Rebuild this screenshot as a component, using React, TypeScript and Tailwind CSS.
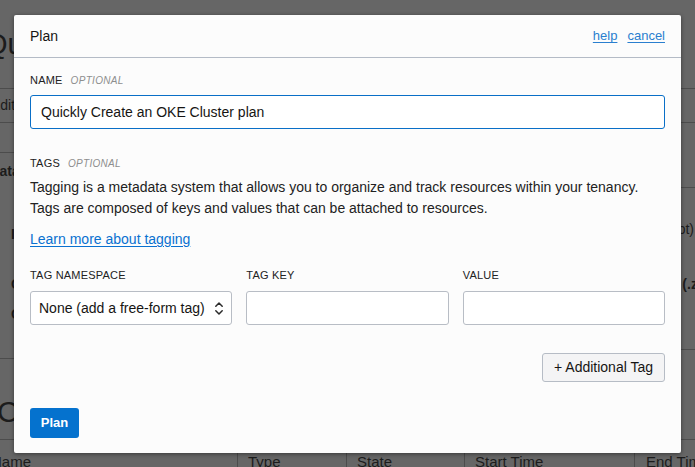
import React from "react";

function Label({ text, optional }: { text: string; optional?: boolean }) {
  return (
    <div className="flex items-baseline h-[14px] leading-[14px]">
      <span className="text-[11px] text-[#222] tracking-[0.2px]">{text}</span>
      {optional && (
        <span className="ml-[8px] text-[10px] italic text-[#8e8e8e] tracking-[0.3px] font-light">
          OPTIONAL
        </span>
      )}
    </div>
  );
}

function Background() {
  return (
    <div className="absolute inset-0 overflow-hidden bg-[#666666] text-[#1c1c1c]">
      <div className="flex flex-col">
        <div className="-ml-[15px] mt-[24px] h-[40px] text-[29px] leading-[40px] whitespace-nowrap">
          Quickly Create an OKE Cluster
        </div>
        <div className="mt-[24px] h-[35px] border-y border-[#4c4c4c] flex items-center -ml-[9px] text-[14px] whitespace-nowrap">
          Edit Stack
        </div>
        <div className="flex mt-[29px]">
          <div className="w-[240px] shrink-0 border-y border-[#4c4c4c] h-[207px] flex flex-col text-[14px] whitespace-nowrap">
            <div className="-ml-[41px] mt-[9px] font-bold leading-[18px]">Metadata</div>
            <div className="pl-[11px] mt-[45px] font-bold leading-[18px]">ID:</div>
            <div className="pl-[11px] mt-[32px] font-bold leading-[18px]">Compartment:</div>
            <div className="pl-[11px] mt-[12px] font-bold leading-[18px]">Created:</div>
          </div>
          <div className="flex-1" />
          <div className="w-[260px] shrink-0 mt-[35px] border-y border-[#4c4c4c] h-[163px] flex flex-col text-[14px] whitespace-nowrap">
            <div className="mt-[32px] flex justify-end pr-[1px] leading-[18px]">Terraform (Script)</div>
            <div className="mt-[37px] flex justify-end -mr-[20px] font-bold leading-[18px]">Terraform config (.zip)</div>
          </div>
        </div>
        <div className="mt-[33px] -ml-[3px] h-[40px] text-[30px] leading-[40px] whitespace-nowrap">
          Cluster Jobs
        </div>
        <div className="mt-[7px] border-t border-[#4c4c4c] flex h-[40px] text-[15px] whitespace-nowrap">
          <div className="w-[238px] shrink-0 border-r border-[#4c4c4c] pt-[11px]">
            <span className="-ml-[9px] inline-block">Name</span>
          </div>
          <div className="w-[109px] shrink-0 border-r border-[#4c4c4c] pl-[10px] pt-[11px]">Type</div>
          <div className="w-[118px] shrink-0 border-r border-[#4c4c4c] pl-[10px] pt-[11px]">State</div>
          <div className="w-[170px] shrink-0 border-r border-[#4c4c4c] pl-[10px] pt-[11px]">Start Time</div>
          <div className="flex-1 min-w-0 pl-[11px] pt-[11px]">End Time</div>
        </div>
      </div>
    </div>
  );
}

function UpDown() {
  return (
    <svg width="10" height="15" viewBox="0 0 10 15" fill="none" stroke="#2a2a2a" strokeWidth="1.5" strokeLinecap="round" strokeLinejoin="round">
      <path d="M1.8 5.2 L5 2 L8.2 5.2" />
      <path d="M1.8 9.8 L5 13 L8.2 9.8" />
    </svg>
  );
}

export default function App() {
  return (
    <div
      className="relative w-[695px] h-[467px] overflow-hidden"
      style={{ fontFamily: '"Liberation Sans", Arial, sans-serif' }}
    >
      <Background />
      <div className="absolute left-[14px] top-[15px] w-[667px] h-[438px] bg-[#fcfcfc] rounded-[2px] shadow-[0_1px_4px_rgba(0,0,0,0.45)] flex flex-col">
        <div className="h-[43px] border-b border-[#b4bbc6] flex items-center justify-between pl-[16px] pr-[16px]">
          <span className="text-[14px] text-[#161513]">Plan</span>
          <div className="flex items-center gap-[10px] text-[13px] text-[#2a7fcf]">
            <span className="underline underline-offset-[2px]">help</span>
            <span className="underline underline-offset-[2px]">cancel</span>
          </div>
        </div>
        <div className="flex flex-col px-[16px] pt-[15px]">
          <Label text="NAME" optional />
          <div className="mt-[8px] h-[34px] border border-[#0a6fc7] rounded-[3px] bg-white flex items-center pl-[10px] text-[14px] text-[#161513]">
            Quickly Create an OKE Cluster plan
          </div>
          <div className="mt-[27px]">
            <Label text="TAGS" optional />
          </div>
          <p className="mt-[7px] text-[14px] leading-[21px] text-[#222]">
            Tagging is a metadata system that allows you to organize and track resources within your tenancy.
            <br />
            Tags are composed of keys and values that can be attached to resources.
          </p>
          <div className="mt-[10px] h-[21px] leading-[21px] text-[14px]">
            <span className="text-[#0a71d0] underline underline-offset-[2px]">Learn more about tagging</span>
          </div>
          <div className="mt-[18px] grid grid-cols-3 gap-x-[14px]">
            <Label text="TAG NAMESPACE" />
            <Label text="TAG KEY" />
            <Label text="VALUE" />
          </div>
          <div className="mt-[9px] grid grid-cols-3 gap-x-[14px]">
            <div className="h-[34px] border border-[#b8bdc5] rounded-[3px] bg-white flex items-center justify-between pl-[8px] pr-[7px] text-[14px] text-[#161513]">
              <span>None (add a free-form tag)</span>
              <UpDown />
            </div>
            <div className="h-[34px] border border-[#b8bdc5] rounded-[3px] bg-white" />
            <div className="h-[34px] border border-[#b8bdc5] rounded-[3px] bg-white" />
          </div>
          <div className="mt-[28px] flex justify-end">
            <div className="h-[29px] w-[123px] border border-[#b6bcc5] rounded-[3px] bg-[#f4f4f5] flex items-center justify-center text-[14px] text-[#161513]">
              + Additional Tag
            </div>
          </div>
          <div className="mt-[26px] flex">
            <div className="h-[30px] w-[49px] rounded-[3px] bg-[#0572ce] flex items-center justify-center text-[13px] font-bold text-white">
              Plan
            </div>
          </div>
        </div>
      </div>
    </div>
  );
}
